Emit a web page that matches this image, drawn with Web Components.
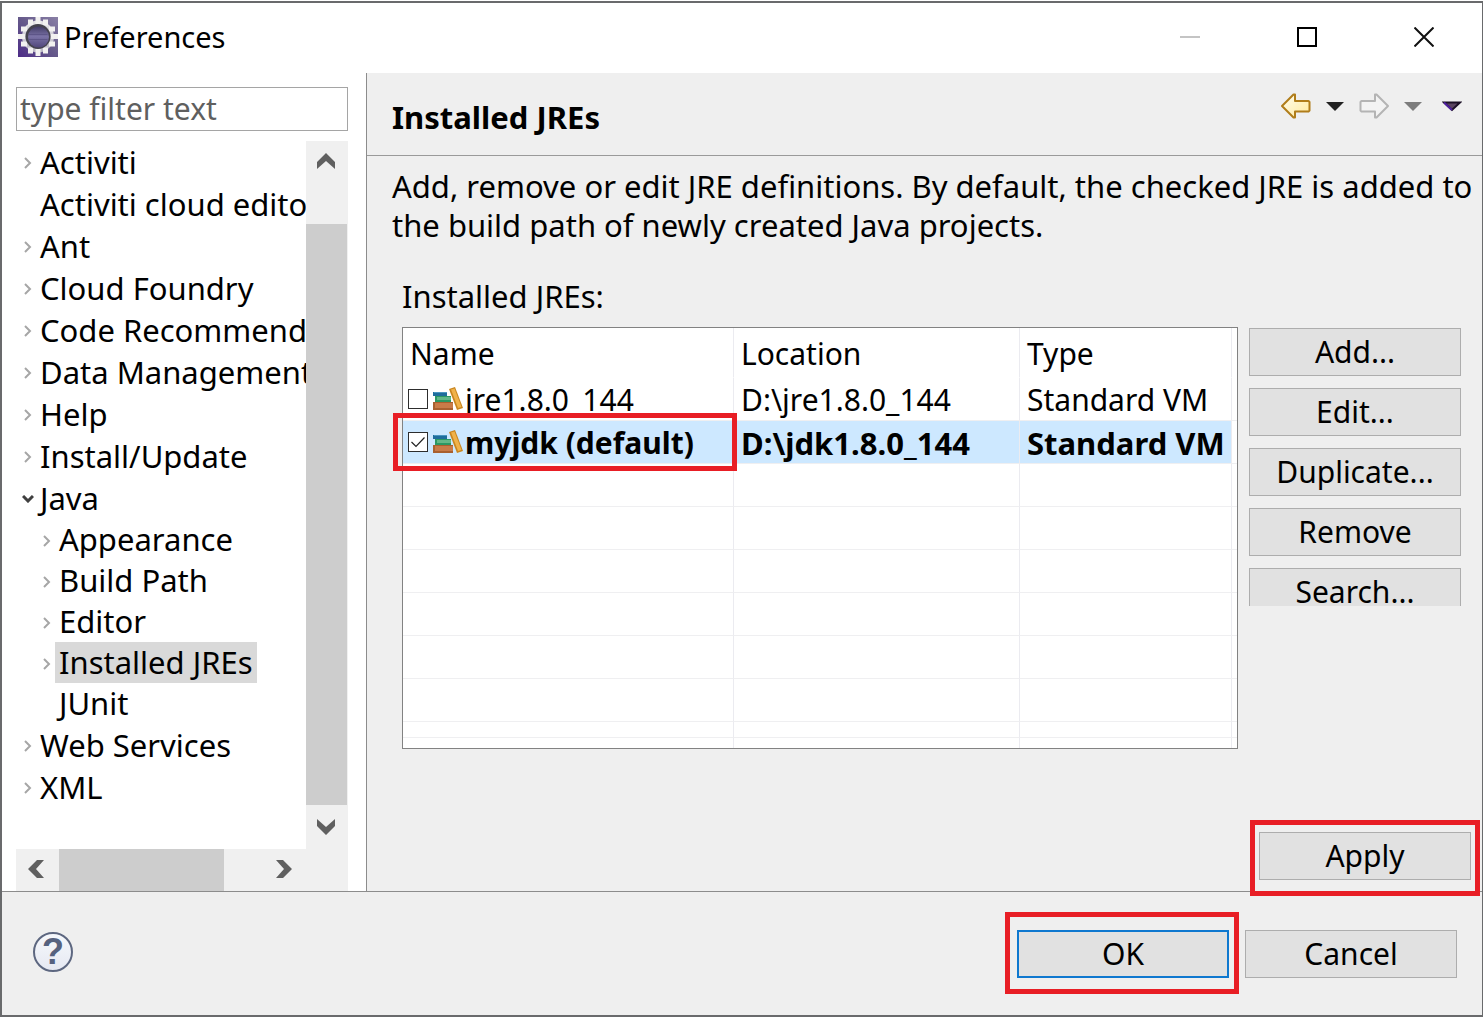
<!DOCTYPE html>
<html lang="en">
<head>
<meta charset="utf-8">
<title>Preferences</title>
<style>
  html { background: #fff; }
  body {
    margin: 0;
    padding: 1px 0;
    box-sizing: border-box;
    min-height: 100vh;
    display: flex;
    flex-direction: column;
    font-family: "Noto Sans", "Open Sans", sans-serif;
    font-size: 30px;
    line-height: 40px;
    color: #000;
    --face: #efefef;
    --line: #8c8c8c;
    --thumb: #cdcdcd;
    --text-large: 31px;
  }
</style>
</head>
<body>
<pref-window></pref-window>
<script>
  function define(name, html, setup) {
    const template = document.createElement('template');
    template.innerHTML = html;
    customElements.define(name, class extends HTMLElement {
      constructor() {
        super();
        this.attachShadow({ mode: 'open' }).append(template.content.cloneNode(true));
      }
      connectedCallback() { if (setup) setup(this, this.shadowRoot); }
    });
  }

  define('mark-box', `
    <style>
      :host { display: block; position: relative; }
      .mark {
        position: absolute; z-index: 2; pointer-events: none;
        inset: var(--mark-inset, -8px);
        border: 5px solid #e81e25;
      }
    </style>
    <slot></slot><div class="mark"></div>`);

  define('push-button', `
    <style>
      :host { display: block; width: 212px; flex: none; }
      button {
        display: block; box-sizing: border-box; width: 100%; height: 48px;
        margin: 0; padding: 0; border: 1px solid #adadad; background: #e1e1e1;
        font: inherit; color: inherit; text-align: center;
      }
      :host([primary]) button { border: 2px solid #0f78cf; }
    </style>
    <button type="button"><slot></slot></button>`);

  define('title-bar', `
    <style>
      :host { display: flex; box-sizing: border-box; height: 70px; padding-bottom: 2px; align-items: center; background: #fff; }
      .logo { margin: 0 6px 0 16px; flex: none; }
      h1 { margin: 0; flex: 1; font: inherit; font-size: 29px; }
      button { width: 117px; height: 68px; border: 0; padding: 0; background: none; display: grid; place-items: center; }
      svg { display: block; }
    </style>
    <svg class="logo" width="40" height="40" viewBox="0 0 40 40">
      <defs>
        <linearGradient id="bg" x1="1" y1="0" x2="0" y2="1"><stop offset="0" stop-color="#8a80a6"/><stop offset=".5" stop-color="#65598a"/><stop offset="1" stop-color="#4d2c88"/></linearGradient>
        <linearGradient id="gear" x1="0" y1="0" x2="0" y2="1"><stop offset="0" stop-color="#e6e5e8"/><stop offset="1" stop-color="#b9b6c4"/></linearGradient>
        <linearGradient id="hole" x1="0" y1="0" x2="0" y2="1"><stop offset="0" stop-color="#423c66"/><stop offset=".48" stop-color="#7a72a6"/><stop offset="1" stop-color="#51477c"/></linearGradient>
      </defs>
      <rect width="40" height="40" fill="url(#bg)"/>
      <circle cx="20" cy="19.500" r="16" fill="url(#gear)"/>
      <g fill="#f2f1f0">
        <path d="M17.500 0h5v7h-5zM17.500 32h5v7h-5zM0 17h7v5H0zM33 17h7v5h-7z"/>
        <path d="M10 2.500h5v6h-5zM25 2.500h5v6h-5zM3 9.500h6v5H3zM31 9.500h6v5h-6zM3 24.500h6v5H3zM31 24.500h6v5h-6zM10 30.500h5v6h-5zM25 30.500h5v6h-5z"/>
      </g>
      <circle cx="20" cy="19.500" r="12.500" fill="#45434e"/>
      <circle cx="20.500" cy="20" r="10.500" fill="url(#hole)"/>
      <path d="M10.500 17.500h19M10.500 22.500h19" stroke="#5d5588" stroke-width="1"/>
    </svg>
    <h1>Preferences</h1>
    <button type="button" aria-label="Minimize" disabled><svg width="20" height="20"><path d="M0 10h20" stroke="#c4c4c4" stroke-width="2"/></svg></button>
    <button type="button" aria-label="Maximize"><svg width="20" height="20"><path d="M1 1h18v18H1z" fill="none" stroke="#000" stroke-width="2"/></svg></button>
    <button type="button" aria-label="Close"><svg width="20" height="20"><path d="M.5.5l19 19M19.500.5l-19 19" stroke="#111" stroke-width="2"/></svg></button>`);

  define('tree-item', `
    <style>
      :host { display: block; }
      .row { display: flex; height: 42px; align-items: center; white-space: nowrap; }
      .twist { width: 17px; flex: none; display: grid; place-items: center; padding-top: 2px; }
      .label { padding: 0 4px; line-height: 41px; }
      svg { display: none; }
      :host([state="closed"]) .closed, :host([state="open"]) .open { display: block; }
      :host([selected]) .label { background: #d9d9d9; }
      :host([slot="child"]) .row { height: 41px; padding-left: 19px; }
    </style>
    <div class="row">
      <span class="twist">
        <svg class="closed" width="8" height="12"><path d="M1 1l5 5-5 5" fill="none" stroke="#a6a6a6" stroke-width="2"/></svg>
        <svg class="open" width="12" height="8"><path d="M1 1l5 5 5-5" fill="none" stroke="#404040" stroke-width="3"/></svg>
      </span>
      <span class="label"><slot></slot></span>
    </div>
    <slot name="child"></slot>`);

  define('scroll-bar', `
    <style>
      :host { display: flex; background: #f0f0f0; }
      button { box-sizing: border-box; border: 0; padding: 0 2px 2px 0; margin: 0; background: none; width: 42px; height: 42px; flex: none; display: grid; place-items: center; }
      .track { flex: 1; display: flex; }
      .before { flex: var(--before, 0); }
      .thumb { flex: var(--size, 1); background: var(--thumb); }
      .after { flex: var(--after, 0); }
      :host([vertical]), :host([vertical]) .track { flex-direction: column; }
      :host([vertical]) .thumb { margin-right: 1px; }
      :host(:not([vertical])) svg { transform: rotate(-90deg); }
    </style>
    <button class="first" type="button" aria-label="Scroll back"><svg width="18" height="16"><path d="M0 9L9 0l9 9v7L9 8 0 16z" fill="#606060"/></svg></button>
    <div class="track"><div class="before"></div><div class="thumb"></div><div class="after"></div></div>
    <button class="last" type="button" aria-label="Scroll forward"><svg width="18" height="16"><path d="M0 7l9 9 9-9V0L9 8 0 0z" fill="#606060"/></svg></button>`);

  define('pref-sidebar', `
    <style>
      :host { display: flex; flex-direction: column; box-sizing: border-box; width: 364px; flex: none; padding: 14px 18px 0 14px; background: #fff; }
      input { box-sizing: border-box; width: 100%; height: 44px; margin: 0 0 10px; border: 1px solid #a5a5a5; padding: 0 3px 2px; background: #fff; font: inherit; color: #000; outline: 0; }
      input::placeholder { color: #5f5f5f; opacity: 1; }
      .view { flex: 1; display: grid; grid-template-columns: minmax(0, 1fr) 42px; grid-template-rows: 1fr 42px; background: #f0f0f0; }
      nav { overflow: hidden; background: #fff; padding-left: 3px; font-size: var(--text-large); }
    </style>
    <input type="text" placeholder="type filter text" aria-label="Filter preferences">
    <div class="view">
      <nav aria-label="Preference pages">
        <tree-item state="closed">Activiti</tree-item>
        <tree-item>Activiti cloud edito</tree-item>
        <tree-item state="closed">Ant</tree-item>
        <tree-item state="closed">Cloud Foundry</tree-item>
        <tree-item state="closed">Code Recommend</tree-item>
        <tree-item state="closed">Data Management</tree-item>
        <tree-item state="closed">Help</tree-item>
        <tree-item state="closed">Install/Update</tree-item>
        <tree-item state="open">Java<tree-item slot="child" state="closed">Appearance</tree-item><tree-item slot="child" state="closed">Build Path</tree-item><tree-item slot="child" state="closed">Editor</tree-item><tree-item slot="child" state="closed" selected>Installed JREs</tree-item><tree-item slot="child">JUnit</tree-item></tree-item>
        <tree-item state="closed">Web Services</tree-item>
        <tree-item state="closed">XML</tree-item>
      </nav>
      <scroll-bar vertical style="--before: 41; --size: 581; --after: 2"></scroll-bar>
      <scroll-bar style="--before: 1; --size: 165; --after: 40"></scroll-bar>
    </div>`);

  define('page-header', `
    <style>
      :host { display: flex; box-sizing: border-box; height: 83px; padding: 0 11px 0 25px; border-bottom: 1px solid #9a9a9a; }
      h2 { margin: 0; padding-top: 6px; flex: 1; align-self: center; font: inherit; font-size: var(--text-large); font-weight: 700; }
      .tools { display: flex; height: 66px; align-items: center; }
      button { border: 0; margin: 0; padding: 0; background: none; height: 32px; display: grid; place-items: center; width: 39px; }
    </style>
    <h2>Installed JREs</h2>
    <div class="tools">
      <button type="button" aria-label="Back"><svg width="30" height="26"><defs><linearGradient id="y" x1="0" y1="0" x2="1" y2="1"><stop offset="0" stop-color="#fffdf0"/><stop offset="1" stop-color="#ffe99a"/></linearGradient></defs><path d="M1 13L12.500 1.500h1.500V8h13.500l1 1v8.500l-1 1H14V24.500h-1.500z" fill="url(#y)" stroke="#b07d1a" stroke-width="2" stroke-linejoin="round"/></svg></button>
      <button type="button" aria-label="Back history"><svg width="18" height="10"><path d="M0 1h18L9 10z" fill="#222"/></svg></button>
      <button type="button" aria-label="Forward"><svg width="30" height="26"><path d="M29 13L17.500 1.500H16V8H2.500l-1 1v8.500l1 1H16V24.500h1.500z" fill="#f3f3f3" stroke="#b4b4b4" stroke-width="2" stroke-linejoin="round"/></svg></button>
      <button type="button" aria-label="Forward history"><svg width="18" height="10"><path d="M0 1h18L9 10z" fill="#7c7c7c"/></svg></button>
      <button type="button" aria-label="View menu"><svg width="20" height="12"><path d="M2 2.500h16L10 10z" fill="#5a4460" stroke="#1c1026" stroke-width="2"/><path d="M2 2.500L10 10" stroke="#4f1fa0" stroke-width="2"/></svg></button>
    </div>`);

  define('books-icon', `
    <style>:host { display: block; flex: none; } svg { display: block; }</style>
    <svg width="30" height="26" viewBox="0 0 30 26">
      <path d="M0 6h14v4H0z" fill="#1f6d9c"/><path d="M1 6h13v1H1z" fill="#4a96c0"/>
      <path d="M2 10h16v6H2z" fill="#2b9863"/><path d="M4 11h14v3H4z" fill="#62b888"/>
      <path d="M0 16h20v8H0z" fill="#a9602f"/><path d="M2 17h18v5H2z" fill="#c87b48"/>
      <path d="M16 3l6-2 8 21-6 2z" fill="#c9851f"/><path d="M18 3.500l3.500-1L28.500 21l-3.500 1z" fill="#f0b24a"/>
    </svg>`);

  define('jre-name', `
    <style>
      :host { display: flex; align-items: center; height: 42px; margin-right: -1px; padding-left: 5px; white-space: nowrap; }
      label { display: flex; align-items: center; }
      input {
        appearance: none; box-sizing: border-box; width: 20px; height: 20px; margin: 0 5px 0 0; flex: none;
        border: 1px solid #2d2d2d; background: #fff center / 18px 18px no-repeat;
      }
      input:checked { background-image: url("data:image/svg+xml,%3Csvg xmlns='http://www.w3.org/2000/svg' viewBox='0 0 18 18'%3E%3Cpath d='M2.500 9l4.500 4.500L15.500 4.500' fill='none' stroke='%23222' stroke-width='1.200'/%3E%3C/svg%3E"); }
      span { padding: 2px 0 0 2px; }
    </style>
    <label><input type="checkbox"><books-icon></books-icon><span><slot></slot></span></label>`,
    (host, root) => { root.querySelector('input').checked = host.hasAttribute('checked'); });

  define('jre-table', `
    <style>
      :host { display: block; flex: 1; min-width: 0; border: 1px solid #828282; background: #fff; }
      table { width: 100%; table-layout: fixed; border-collapse: separate; border-spacing: 0; }
      .location { width: 286px; } .type { width: 212px; } .rest { width: 5px; }
      th, td { padding: 2px 0 0 7px; text-align: left; font-weight: 400; white-space: nowrap; line-height: 40px; border-right: 1px solid #ebebf0; border-bottom: 1px solid #efeff1; box-sizing: border-box; }
      th:last-child, td:last-child { padding: 0; border-right: 0; }
      th { height: 50px; border-bottom-color: #fff; }
      td { height: 43px; }
      td:first-child { padding: 0; }
      .current td { font-size: var(--text-large); font-weight: 700; background: #cde8ff; }
      .current td:last-child { background: none; }
      .current jre-name { font-size: 30px; }
      .short td { height: 16px; } .last td { height: 10px; border-bottom: 0; }
      mark-box { --mark-inset: -8px -4px -8px -10px; }
    </style>
    <table aria-label="Installed JREs">
      <colgroup><col><col class="location"><col class="type"><col class="rest"></colgroup>
      <thead><tr><th>Name</th><th>Location</th><th>Type</th><th></th></tr></thead>
      <tbody>
        <tr><td><jre-name>jre1.8.0_144</jre-name></td><td>D:\\jre1.8.0_144</td><td>Standard VM</td><td></td></tr>
        <tr class="current"><td><mark-box><jre-name checked>myjdk (default)</jre-name></mark-box></td><td>D:\\jdk1.8.0_144</td><td>Standard VM</td><td></td></tr>
        <tr><td></td><td></td><td></td><td></td></tr>
        <tr><td></td><td></td><td></td><td></td></tr>
        <tr><td></td><td></td><td></td><td></td></tr>
        <tr><td></td><td></td><td></td><td></td></tr>
        <tr><td></td><td></td><td></td><td></td></tr>
        <tr><td></td><td></td><td></td><td></td></tr>
        <tr class="short"><td></td><td></td><td></td><td></td></tr>
        <tr class="last"><td></td><td></td><td></td><td></td></tr>
      </tbody>
    </table>`);

  define('jre-page', `
    <style>
      :host { display: flex; flex-direction: column; flex: 1; min-width: 0; background: var(--face); border-left: 1px solid var(--line); }
      .intro { margin: 0; padding: 11px 0 0 25px; line-height: 39px; font-size: var(--text-large); }
      .caption { margin: 0; padding: 31px 0 0 35px; font-size: var(--text-large); }
      .body { display: flex; align-items: flex-start; gap: 11px; padding: 11px 21px 0 35px; }
      .actions { display: flex; flex-direction: column; gap: 12px; height: 278px; padding-top: 1px; overflow: hidden; }
      .apply { display: flex; justify-content: flex-end; margin-top: auto; padding: 0 11px 11px 0; }
      mark-box { --mark-inset: -12px -9px -16px -9px; }
    </style>
    <page-header></page-header>
    <p class="intro">Add, remove or edit JRE definitions. By default, the checked JRE is added to the build path of newly created Java projects.</p>
    <p class="caption">Installed JREs:</p>
    <div class="body">
      <jre-table></jre-table>
      <div class="actions">
        <push-button>Add...</push-button>
        <push-button>Edit...</push-button>
        <push-button>Duplicate...</push-button>
        <push-button>Remove</push-button>
        <push-button>Search...</push-button>
      </div>
    </div>
    <div class="apply"><mark-box><push-button>Apply</push-button></mark-box></div>`);

  define('dialog-footer', `
    <style>
      :host { display: flex; align-items: center; gap: 16px; box-sizing: border-box; height: 124px; padding: 0 25px 0 31px; border-top: 1px solid var(--line); background: var(--face); }
      .help {
        box-sizing: border-box; width: 40px; height: 40px; margin: 0 auto 4px 0; padding: 0; border: 2px solid #5d6780; border-radius: 50%;
        background: linear-gradient(#f6f8fc, #e6e9f2); color: #56627f; font: 700 36px/36px "Liberation Sans", sans-serif; text-align: center;
      }
      mark-box { --mark-inset: -18px -10px -16px -12px; }
    </style>
    <button class="help" type="button" aria-label="Help">?</button>
    <mark-box><push-button primary>OK</push-button></mark-box>
    <push-button>Cancel</push-button>`);

  define('pref-window', `
    <style>
      :host { display: flex; flex-direction: column; flex: 1; border: solid #696a6c; border-width: 2px 1px 2px 2px; }
      .panes { display: flex; flex: 1; }
    </style>
    <title-bar></title-bar>
    <div class="panes"><pref-sidebar></pref-sidebar><jre-page></jre-page></div>
    <dialog-footer></dialog-footer>`);
</script>
</body>
</html>
